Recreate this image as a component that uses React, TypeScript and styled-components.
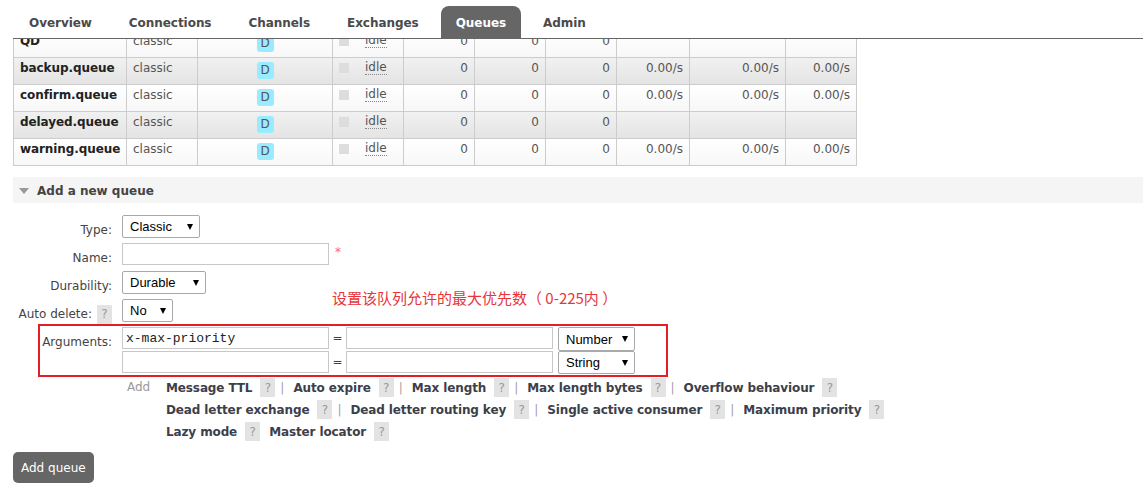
import React from 'react';
import styled, { createGlobalStyle } from 'styled-components';

const GlobalStyle = createGlobalStyle`
  html, body { margin: 0; padding: 0; background: #fff; }
  body {
    font-family: "DejaVu Sans", Verdana, sans-serif;
    font-size: 12px;
    line-height: 14px;
    color: #444;
    overflow: hidden;
  }
  * { box-sizing: border-box; }
`;

const Page = styled.div`
  padding-left: 13px;
  width: 100%;
`;

const Nav = styled.ul`
  display: flex;
  gap: 7px;
  margin: 0;
  padding: 6px 0 0 1px;
  list-style: none;
  border-bottom: 1px solid #666;
  position: relative;
  z-index: 1;
  background: #fff;
`;

const Tab = styled.li<{ $active?: boolean }>`
  height: 32px;
  padding: 2px 15px 0;
  display: flex;
  align-items: center;
  font-weight: bold;
  letter-spacing: -0.05px;
  color: ${(p) => (p.$active ? '#fff' : '#4a4a4a')};
  background: ${(p) => (p.$active ? '#666' : 'transparent')};
  border-radius: 8px 8px 0 0;
`;

const TableClip = styled.div`
  overflow: hidden;
`;

const QueueTable = styled.table`
  border-collapse: collapse;
  table-layout: fixed;
  width: 844px;
  margin-top: -9px;
`;

const Row = styled.tr<{ $grey: boolean }>`
  background: ${(p) =>
    p.$grey ? 'linear-gradient(#f1f1f1, #e3e3e3)' : 'linear-gradient(#ffffff, #f7f7f7)'};
`;

const Cell = styled.td<{ $align?: 'left' | 'right' | 'center' }>`
  border: 1px solid #ccc;
  height: 27px;
  padding: 3px 6px 0;
  vertical-align: top;
  text-align: ${(p) => p.$align ?? 'left'};
  white-space: nowrap;
  color: #555;
`;

const NameCell = styled(Cell)`
  font-weight: bold;
  letter-spacing: -0.08px;
  color: #222;
`;

const Badge = styled.span`
  display: inline-block;
  width: 17px;
  height: 17px;
  line-height: 17px;
  margin-top: 1px;
  border-radius: 3px;
  background: #99ebff;
  color: #555;
  text-align: center;
`;

const StateWrap = styled.div`
  display: flex;
  align-items: flex-start;
`;

const StateDot = styled.span`
  width: 10px;
  height: 10px;
  margin-top: 2px;
  margin-right: 16px;
  background: #ddd;
`;

const Idle = styled.span`
  border-bottom: 1px dotted #888;
  line-height: 13px;
`;

const SectionBar = styled.div`
  margin-top: 11px;
  height: 26px;
  background: #f5f5f5;
  display: flex;
  align-items: center;
  gap: 8px;
  padding: 1px 0 0 6px;
  font-weight: bold;
  color: #444;
`;

const Caret = styled.span`
  width: 0;
  height: 0;
  border-left: 5.5px solid transparent;
  border-right: 5.5px solid transparent;
  border-top: 6px solid #999;
`;

const Form = styled.div`
  position: relative;
  margin-top: 12px;
`;

const FormRow = styled.div<{ $h?: number }>`
  display: flex;
  align-items: flex-start;
  height: ${(p) => p.$h ?? 28}px;
`;

const Label = styled.div`
  width: 99px;
  margin-right: 10px;
  flex: none;
  display: flex;
  justify-content: flex-end;
  align-items: center;
  gap: 5px;
  padding-top: 8px;
  height: 22px;
  color: #444;
`;

const HelpBox = styled.span<{ $ml?: number }>`
  display: inline-flex;
  align-items: center;
  justify-content: center;
  width: 15px;
  height: 19px;
  flex: none;
  margin-left: ${(p) => p.$ml ?? 0}px;
  background: #e3e3e3;
  color: #999;
  font-weight: normal;
  letter-spacing: 0;
`;

const SelectWrap = styled.div<{ $w: number; $h?: number }>`
  position: relative;
  width: ${(p) => p.$w}px;
  height: ${(p) => p.$h ?? 23}px;
  flex: none;
  &::after {
    content: '';
    position: absolute;
    right: 7px;
    top: 50%;
    margin-top: -3px;
    border-left: 3px solid transparent;
    border-right: 3px solid transparent;
    border-top: 6px solid #000;
    pointer-events: none;
  }
`;

const Select = styled.select`
  appearance: none;
  -webkit-appearance: none;
  width: 100%;
  height: 100%;
  margin: 0;
  padding: 0 0 0 7px;
  border: 1px solid #a9a9a9;
  border-radius: 2px;
  background: #fff;
  font-family: "Liberation Sans", Arial, sans-serif;
  font-size: 13px;
  color: #000;
`;

const TextInput = styled.input`
  width: 207px;
  height: 22px;
  flex: none;
  margin: 0;
  padding: 0 3px;
  border: 1px solid #c8c8c8;
  background: #fff;
  font-family: "Liberation Mono", "Courier New", monospace;
  font-size: 13px;
  color: #222;
`;

const Star = styled.span`
  margin-left: 6px;
  padding-top: 2px;
  color: #f66;
`;

const ArgsGroup = styled.div`
  position: relative;
`;

const Eq = styled.span`
  width: 17px;
  flex: none;
  text-align: center;
  padding-top: 4px;
  color: #444;
`;

const Gap = styled.span`
  width: 5px;
  flex: none;
`;

const Highlight = styled.div`
  position: absolute;
  left: 25px;
  top: -3px;
  width: 630px;
  height: 53px;
  border: 2px solid #e31e24;
  pointer-events: none;
`;

const Note = styled.div`
  position: absolute;
  left: 319px;
  top: 73px;
  font-family: "Noto Sans CJK SC", "Noto Sans", sans-serif;
  font-size: 15px;
  line-height: 20px;
  color: #e8353a;
  white-space: nowrap;
`;

const AddRow = styled.div`
  display: flex;
  align-items: flex-start;
  margin-top: 3px;
  padding-left: 109px;
`;

const AddWord = styled.span`
  width: 44px;
  flex: none;
  padding-left: 5px;
  padding-top: 2px;
  color: #999;
`;

const LinkLines = styled.div`
  display: flex;
  flex-direction: column;
  gap: 3px;
`;

const LinkLine = styled.div`
  display: flex;
  align-items: center;
  height: 19px;
  white-space: nowrap;
`;

const LinkText = styled.span`
  font-weight: bold;
  letter-spacing: -0.12px;
  color: #3c3f4a;
`;

const Sep = styled.span`
  margin: 0 9px 0 5px;
  color: #a0a0a8;
`;

const Space = styled.span`
  width: 9px;
  flex: none;
`;

const Button = styled.button`
  margin-top: 11px;
  height: 31px;
  padding: 0 8px;
  border: none;
  border-radius: 5px;
  background: #666;
  color: #fff;
  font-family: "DejaVu Sans", Verdana, sans-serif;
  font-size: 12px;
`;

const tabs = ['Overview', 'Connections', 'Channels', 'Exchanges', 'Queues', 'Admin'];

const queues = [
  { name: 'QD', rates: false },
  { name: 'backup.queue', rates: true },
  { name: 'confirm.queue', rates: true },
  { name: 'delayed.queue', rates: false },
  { name: 'warning.queue', rates: true },
];

const colWidths = [113, 71, 135, 71, 71, 71, 71, 73, 96, 71];

const linkLines: { items: string[]; sep: boolean }[] = [
  { items: ['Message TTL', 'Auto expire', 'Max length', 'Max length bytes', 'Overflow behaviour'], sep: true },
  { items: ['Dead letter exchange', 'Dead letter routing key', 'Single active consumer', 'Maximum priority'], sep: true },
  { items: ['Lazy mode', 'Master locator'], sep: false },
];

export default function App() {
  return (
    <>
      <GlobalStyle />
      <Page>
        <Nav>
          {tabs.map((t) => (
            <Tab key={t} $active={t === 'Queues'}>
              {t}
            </Tab>
          ))}
        </Nav>

        <TableClip>
          <QueueTable>
            <colgroup>
              {colWidths.map((w, i) => (
                <col key={i} style={{ width: w }} />
              ))}
            </colgroup>
            <tbody>
              {queues.map((q, i) => (
                <Row key={q.name} $grey={i % 2 === 1}>
                  <NameCell>{q.name}</NameCell>
                  <Cell>classic</Cell>
                  <Cell $align="center">
                    <Badge>D</Badge>
                  </Cell>
                  <Cell>
                    <StateWrap>
                      <StateDot />
                      <Idle>idle</Idle>
                    </StateWrap>
                  </Cell>
                  <Cell $align="right">0</Cell>
                  <Cell $align="right">0</Cell>
                  <Cell $align="right">0</Cell>
                  <Cell $align="right">{q.rates ? '0.00/s' : ''}</Cell>
                  <Cell $align="right">{q.rates ? '0.00/s' : ''}</Cell>
                  <Cell $align="right">{q.rates ? '0.00/s' : ''}</Cell>
                </Row>
              ))}
            </tbody>
          </QueueTable>
        </TableClip>

        <SectionBar>
          <Caret />
          <span>Add a new queue</span>
        </SectionBar>

        <Form>
          <Note>设置该队列允许的最大优先数（ 0-225内 ）</Note>

          <FormRow>
            <Label>Type:</Label>
            <SelectWrap $w={78}>
              <Select defaultValue="classic">
                <option value="classic">Classic</option>
                <option value="quorum">Quorum</option>
              </Select>
            </SelectWrap>
          </FormRow>

          <FormRow>
            <Label>Name:</Label>
            <TextInput defaultValue="" />
            <Star>*</Star>
          </FormRow>

          <FormRow>
            <Label>Durability:</Label>
            <SelectWrap $w={84}>
              <Select defaultValue="durable">
                <option value="durable">Durable</option>
                <option value="transient">Transient</option>
              </Select>
            </SelectWrap>
          </FormRow>

          <FormRow>
            <Label>
              Auto delete:<HelpBox>?</HelpBox>
            </Label>
            <SelectWrap $w={51}>
              <Select defaultValue="no">
                <option value="no">No</option>
                <option value="yes">Yes</option>
              </Select>
            </SelectWrap>
          </FormRow>

          <ArgsGroup>
            <Highlight />
            <FormRow $h={24}>
              <Label>Arguments:</Label>
              <TextInput defaultValue="x-max-priority" />
              <Eq>=</Eq>
              <TextInput defaultValue="" />
              <Gap />
              <SelectWrap $w={77} $h={24}>
                <Select defaultValue="number">
                  <option value="string">String</option>
                  <option value="number">Number</option>
                  <option value="boolean">Boolean</option>
                  <option value="list">List</option>
                </Select>
              </SelectWrap>
            </FormRow>
            <FormRow $h={24}>
              <Label />
              <TextInput defaultValue="" />
              <Eq>=</Eq>
              <TextInput defaultValue="" />
              <Gap />
              <SelectWrap $w={77} $h={23}>
                <Select defaultValue="string">
                  <option value="string">String</option>
                  <option value="number">Number</option>
                  <option value="boolean">Boolean</option>
                  <option value="list">List</option>
                </Select>
              </SelectWrap>
            </FormRow>
          </ArgsGroup>

          <AddRow>
            <AddWord>Add</AddWord>
            <LinkLines>
              {linkLines.map((line, li) => (
                <LinkLine key={li}>
                  {line.items.map((item, ii) => (
                    <React.Fragment key={item}>
                      <LinkText>{item}</LinkText>
                      <HelpBox $ml={8}>?</HelpBox>
                      {ii < line.items.length - 1 && (line.sep ? <Sep>|</Sep> : <Space />)}
                    </React.Fragment>
                  ))}
                </LinkLine>
              ))}
            </LinkLines>
          </AddRow>

          <Button>Add queue</Button>
        </Form>
      </Page>
    </>
  );
}
